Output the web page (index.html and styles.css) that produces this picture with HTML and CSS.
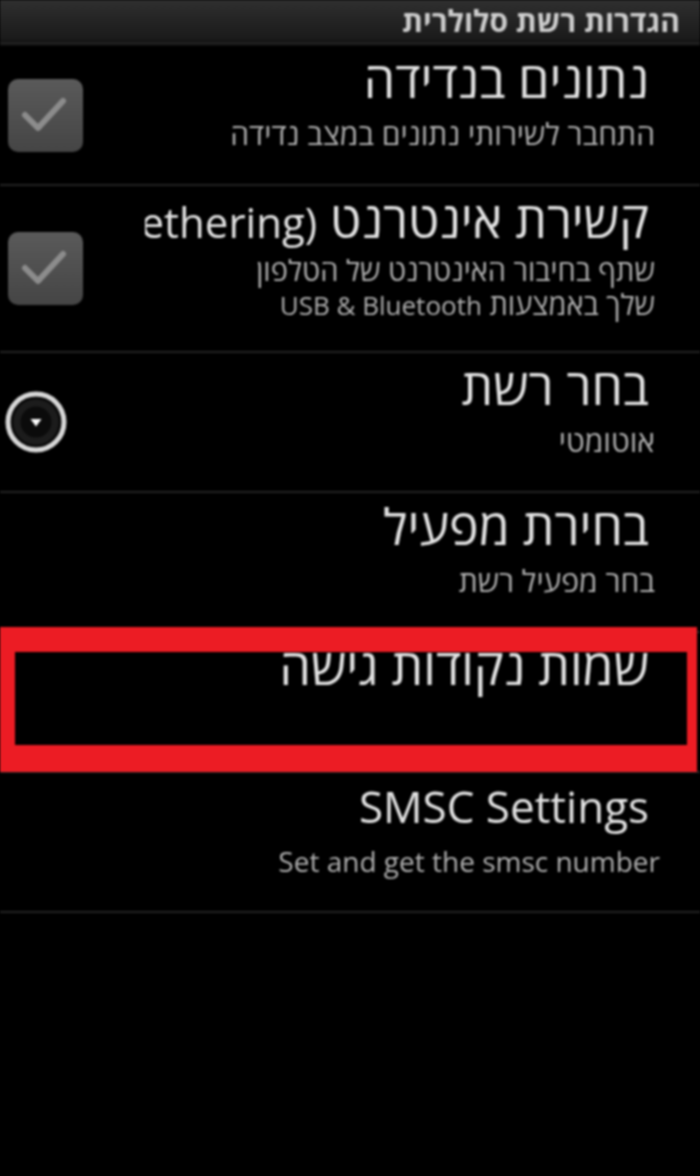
FILE: index.html
```html
<!DOCTYPE html>
<html lang="he" dir="rtl">
<head>
<meta charset="utf-8">
<title>הגדרות רשת סלולרית</title>
<link rel="stylesheet" href="styles.css">
</head>
<body>
<div class="screen">
  <header class="titlebar">הגדרות רשת סלולרית</header>
  <div class="titlesep"></div>
  <ul class="prefs">
    <li class="pref">
      <div class="text">
        <div class="title">נתונים בנדידה</div>
        <div class="summary">התחבר לשירותי נתונים במצב נדידה</div>
      </div>
      <div class="widget widget-check">
        <span class="checkbox">
          <svg viewBox="0 0 75 73" width="75" height="73"><path d="M17 36 L30 49 L55 22" fill="none" stroke="#8c8c8c" stroke-width="6" stroke-linecap="round" stroke-linejoin="round"/></svg>
        </span>
      </div>
    </li>
    <li class="pref">
      <div class="text">
        <div class="title">קשירת אינטרנט <span class="latin">(Tethering)</span></div>
        <div class="summary summary-mixed">שתף בחיבור האינטרנט של הטלפון<br>שלך באמצעות <span class="latin-small">USB &amp; Bluetooth</span></div>
      </div>
      <div class="widget widget-check">
        <span class="checkbox">
          <svg viewBox="0 0 75 73" width="75" height="73"><path d="M17 36 L30 49 L55 22" fill="none" stroke="#8c8c8c" stroke-width="6" stroke-linecap="round" stroke-linejoin="round"/></svg>
        </span>
      </div>
    </li>
    <li class="pref">
      <div class="text">
        <div class="title">בחר רשת</div>
        <div class="summary">אוטומטי</div>
      </div>
      <div class="widget widget-radio">
        <svg viewBox="0 0 66 66" width="66" height="66"><circle cx="33" cy="33" r="28" fill="#0b0b0b" stroke="#d8d8d8" stroke-width="5"/><circle cx="33" cy="33" r="19" fill="none" stroke="#1c1c1c" stroke-width="7"/><path d="M27.5 30 L38.5 30 L33 37.5 Z" fill="#ffffff"/></svg>
      </div>
    </li>
    <li class="pref">
      <div class="text">
        <div class="title">בחירת מפעיל</div>
        <div class="summary">בחר מפעיל רשת</div>
      </div>
    </li>
    <li class="pref highlight">
      <div class="text">
        <div class="title">שמות נקודות גישה</div>
      </div>
    </li>
    <li class="pref">
      <div class="text">
        <div class="title title-en">SMSC Settings</div>
        <div class="summary summary-en">Set and get the smsc number</div>
      </div>
    </li>
  </ul>
</div>
</body>
</html>
```

FILE: styles.css
```css
* {
  box-sizing: border-box;
}

html, body {
  margin: 0;
  padding: 0;
  background: #000;
}

body {
  font-family: "Open Sans", "DejaVu Sans", sans-serif;
}

.screen {
  width: 700px;
  height: 1176px;
  background: #000;
  overflow: hidden;
  filter: blur(0.8px);
}

.titlebar {
  height: 40px;
  background: linear-gradient(#2f2f2f, #1a1a1a);
  color: #cdcdcd;
  font-size: 30px;
  font-weight: bold;
  line-height: 42px;
  padding-right: 20px;
  white-space: nowrap;
  overflow: hidden;
}

.titlesep {
  height: 6px;
  background: linear-gradient(#0c0c0c, #1f1f1f 40%, #1f1f1f 70%, #050505);
}

.prefs {
  list-style: none;
  margin: 0;
  padding: 0;
}

.pref {
  position: relative;
  display: flex;
  min-height: 140px;
  border-bottom: 2px solid #232323;
}

.text {
  flex: 1;
  min-width: 0;
  overflow: hidden;
  padding: 9px 0 22px;
}

.title {
  font-size: 50px;
  line-height: 48px;
  color: #e2e2e2;
  white-space: nowrap;
  padding-right: 51px;
}

.title .latin {
  font-size: 42px;
}

.title-en {
  font-size: 44px;
}

.summary {
  font-size: 30px;
  line-height: 34px;
  color: #b0b0b0;
  margin-top: 14px;
  padding-right: 45px;
  white-space: nowrap;
}

.summary-mixed {
  font-size: 29px;
  margin-top: 7px;
  margin-bottom: 7px;
}

.latin-small {
  font-size: 26px;
}

.summary-en {
  font-size: 28px;
  padding-right: 40px;
}

.widget {
  flex: none;
  width: 145px;
  align-self: center;
  display: flex;
  justify-content: flex-end;
}

.widget-check {
  padding-left: 8px;
}

.widget-radio {
  padding-left: 3px;
}

.widget svg {
  display: block;
}

.checkbox {
  display: block;
  width: 75px;
  height: 73px;
  border-radius: 10px;
  background: linear-gradient(#5a5a5a, #454545);
}

.highlight::after {
  content: "";
  box-sizing: border-box;
  position: absolute;
  top: -6px;
  left: 0;
  right: 3px;
  height: 145px;
  border-style: solid;
  border-color: #ec1c24;
  border-width: 25px 10px 27px 15px;
}
```
